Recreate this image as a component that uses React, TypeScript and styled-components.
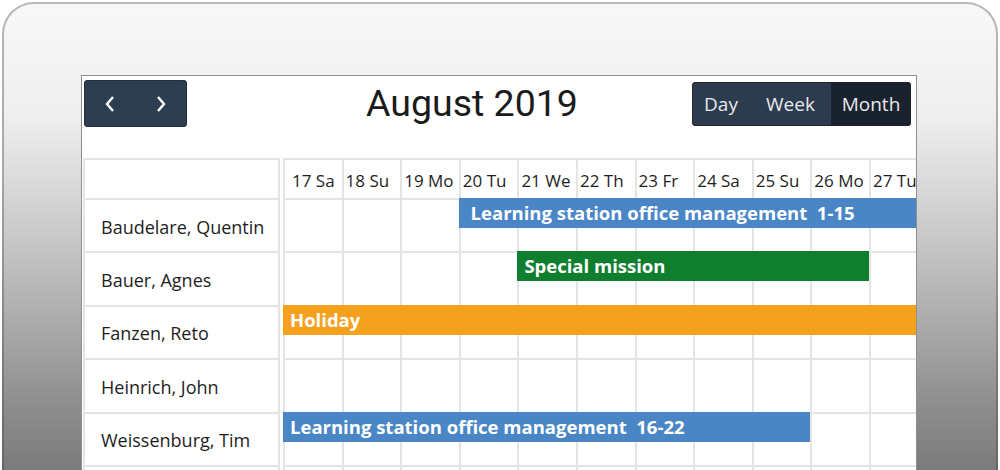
import styled, { createGlobalStyle } from 'styled-components';

const GlobalStyle = createGlobalStyle`
  html, body {
    margin: 0;
    padding: 0;
    overflow: hidden;
    background: #ffffff;
  }
  body {
    font-family: 'Open Sans', 'DejaVu Sans', sans-serif;
  }
`;

const COL = 58.6;
const LINE = '#e4e4e4';

const days = ['17 Sa', '18 Su', '19 Mo', '20 Tu', '21 We', '22 Th', '23 Fr', '24 Sa', '25 Su', '26 Mo', '27 Tu'];

type Booking = { title: string; start: number; span: number; color: string };

const people: { name: string; booking?: Booking }[] = [
	{ name: 'Baudelare, Quentin', booking: { title: ' Learning station office management  1-15', start: 4, span: 8, color: '#4a86c5' } },
	{ name: 'Bauer, Agnes', booking: { title: 'Special mission', start: 5, span: 6, color: '#0f7f2f' } },
	{ name: 'Fanzen, Reto', booking: { title: 'Holiday', start: 1, span: 11, color: '#f4a21e' } },
	{ name: 'Heinrich, John' },
	{ name: 'Weissenburg, Tim', booking: { title: 'Learning station office management  16-22', start: 1, span: 9, color: '#4a86c5' } },
	{ name: '' }
];

const Rim = styled.div`
	margin: 2px 2px 0 2px;
	padding: 2px 2px 0 2px;
	height: 468px;
	box-sizing: border-box;
	border-radius: 32px 32px 0 0;
	background: linear-gradient(to bottom, #b8b8b8 0%, #a4a4a4 40%, #646464 100%);
`;

const Bezel = styled.div`
	display: flex;
	height: 100%;
	box-sizing: border-box;
	padding: 71px 79px 0 77px;
	border-radius: 30px 30px 0 0;
	background: linear-gradient(
		to bottom,
		#f8f8f8 0px,
		#efefef 110px,
		#d3d3d3 200px,
		#aeaeae 310px,
		#8e8e8e 400px,
		#7a7a7a 470px
	);
`;

const Screen = styled.div`
	flex: 1;
	min-width: 0;
	background: #ffffff;
	border: 1px solid #8f8f8f;
	border-bottom: none;
	padding: 4px 0 0 1px;
	overflow: hidden;
`;

const Toolbar = styled.div`
	display: flex;
	align-items: center;
	height: 47px;
	padding: 0 5px 0 1px;
`;

const NavGroup = styled.div`
	display: flex;
	height: 47px;
	border-radius: 4px;
	background: #2d3e50;
	box-shadow: inset 0 0 0 1px #22303e;
	overflow: hidden;
`;

const NavButton = styled.button`
	display: flex;
	align-items: center;
	justify-content: center;
	width: 51.5px;
	height: 100%;
	padding: 0;
	border: none;
	background: transparent;
	cursor: pointer;
`;

const Title = styled.h1`
	margin: 0 0 0 179px;
	font-family: Roboto, 'Liberation Sans', sans-serif;
	font-size: 37.5px;
	font-weight: 400;
	line-height: 1;
	color: #1b1b1b;
`;

const ViewGroup = styled.div`
	display: flex;
	margin-left: auto;
	height: 44px;
	border-radius: 4px;
	overflow: hidden;
	background: #2c3b4d;
	box-shadow: inset 0 0 0 1px #1f2a36;
`;

const ViewButton = styled.button<{ $width: number; $active?: boolean }>`
	width: ${(p) => p.$width}px;
	height: 100%;
	padding: 0;
	border: none;
	font-family: 'Open Sans', sans-serif;
	font-size: 19px;
	color: #e6eaef;
	background: ${(p) => (p.$active ? '#19222d' : 'transparent')};
	cursor: pointer;
`;

const Grid = styled.div`
	display: flex;
	gap: 3px;
	margin-top: 31px;
`;

const NameColumn = styled.div`
	display: flex;
	flex-direction: column;
	flex: 0 0 197px;
`;

const NameCell = styled.div<{ $height: number }>`
	display: flex;
	align-items: center;
	box-sizing: border-box;
	height: ${(p) => p.$height}px;
	padding: 2px 0 0 16px;
	border: 2px solid ${LINE};
	border-bottom: none;
	font-size: 18px;
	color: #1e1e1e;
	white-space: nowrap;
`;

const Timeline = styled.div`
	flex: 1;
	min-width: 0;
	overflow: hidden;
`;

const TimeRow = styled.div<{ $height: number }>`
	display: grid;
	grid-template-columns: repeat(${days.length}, ${COL}px);
	height: ${(p) => p.$height}px;
	background-image: linear-gradient(${LINE}, ${LINE}), repeating-linear-gradient(to right, ${LINE} 0 2px, transparent 2px ${COL}px);
	background-size: 100% 2px, auto;
	background-position: top left, top left;
	background-repeat: no-repeat, repeat;
`;

const DayLabel = styled.div<{ $lead?: boolean }>`
	display: flex;
	align-items: center;
	padding: 5px 0 0 ${(p) => (p.$lead ? 9 : 4)}px;
	font-size: 17px;
	color: #1e1e1e;
	white-space: nowrap;
`;

const Bar = styled.div<{ $start: number; $span: number; $color: string }>`
	grid-row: 1;
	grid-column: ${(p) => p.$start} / span ${(p) => p.$span};
	align-self: start;
	height: 30px;
	padding-left: 7px;
	background: ${(p) => p.$color};
	color: #ffffff;
	font-size: 18.5px;
	font-weight: 700;
	line-height: 30px;
	white-space: pre;
	overflow: hidden;
`;

const Chevron = ({ dir }: { dir: 'left' | 'right' }) => (
	<svg width="12" height="18" viewBox="0 0 12 18">
		<polyline
			points={dir === 'left' ? '9,2 3,9 9,16' : '3,2 9,9 3,16'}
			fill="none"
			stroke="#ffffff"
			strokeWidth="2.4"
		/>
	</svg>
);

const App = () => {
	return (
		<>
			<GlobalStyle />
			<Rim>
				<Bezel>
					<Screen>
						<Toolbar>
							<NavGroup>
								<NavButton aria-label="Previous">
									<Chevron dir="left" />
								</NavButton>
								<NavButton aria-label="Next">
									<Chevron dir="right" />
								</NavButton>
							</NavGroup>
							<Title>August 2019</Title>
							<ViewGroup>
								<ViewButton $width={58}>Day</ViewButton>
								<ViewButton $width={81}>Week</ViewButton>
								<ViewButton $width={80} $active>
									Month
								</ViewButton>
							</ViewGroup>
						</Toolbar>
						<Grid>
							<NameColumn>
								<NameCell $height={40} />
								{people.map((p, i) => (
									<NameCell key={i} $height={53.4}>
										{p.name}
									</NameCell>
								))}
							</NameColumn>
							<Timeline>
								<TimeRow $height={40}>
									{days.map((d, i) => (
										<DayLabel key={d} $lead={i === 0}>
											{d}
										</DayLabel>
									))}
								</TimeRow>
								{people.map((p, i) => (
									<TimeRow key={i} $height={53.4}>
										{p.booking && (
											<Bar $start={p.booking.start} $span={p.booking.span} $color={p.booking.color}>
												{p.booking.title}
											</Bar>
										)}
									</TimeRow>
								))}
							</Timeline>
						</Grid>
					</Screen>
				</Bezel>
			</Rim>
		</>
	);
};

export default App;
